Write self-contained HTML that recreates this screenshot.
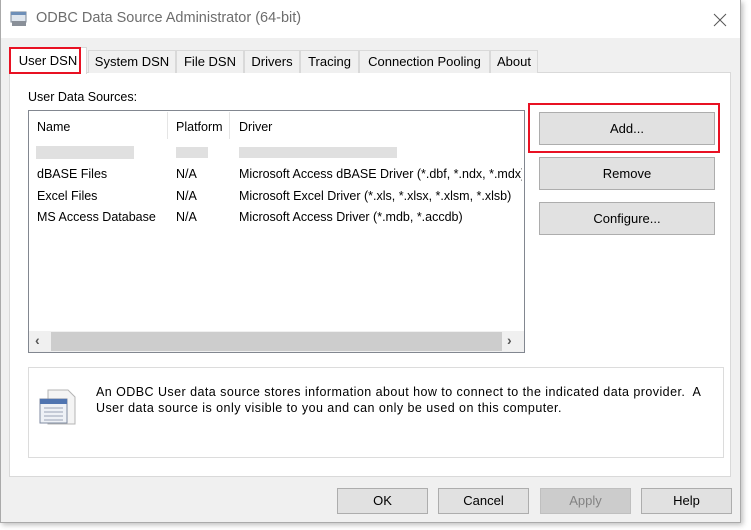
<!DOCTYPE html>
<html><head><style>
*{margin:0;padding:0;box-sizing:border-box}
body{width:751px;height:530px;background:#fff;position:relative;overflow:hidden;font-family:"Liberation Sans",sans-serif;font-size:12px;color:#000}
.abs{position:absolute}
.win{left:0;top:0;width:741px;height:523px;background:#f0f0f0;border:1px solid #aaa;border-top:none;box-shadow:2px 2px 5px rgba(0,0,0,.25)}
.title{left:1px;top:0;width:739px;height:38px;background:#fff}
.tab{position:absolute;top:50px;height:23px;background:#f0f0f0;border:1px solid #d9d9d9;border-bottom:none;text-align:center;line-height:21px;font-size:13px}
.btn{position:absolute;background:#e1e1e1;border:1px solid #adadad;text-align:center;font-size:13px}
.row{position:absolute;font-size:12.5px}
</style></head><body>
<div class="abs win"></div>
<div class="abs title"></div>
<svg class="abs" style="left:10px;top:10px" width="18" height="18" viewBox="0 0 18 18"><rect x="1" y="2" width="15" height="10" fill="#dfe6ee" stroke="#7b8796"/><rect x="1" y="2" width="15" height="3" fill="#6e8fb8"/><rect x="2" y="11" width="14" height="5" fill="#8a9099"/></svg>
<div class="abs" style="left:36px;top:10px;font-size:14.5px;color:#6d6d6d">ODBC Data Source Administrator (64-bit)</div>
<svg class="abs" style="left:713px;top:13px" width="14" height="14"><path d="M1 1L13 13M13 1L1 13" stroke="#555" stroke-width="1"/></svg>
<div class="abs" style="left:9px;top:72px;width:722px;height:405px;background:#fff;border:1px solid #d9d9d9"></div>
<div class="tab" style="left:88px;width:88px">System DSN</div>
<div class="tab" style="left:176px;width:68px">File DSN</div>
<div class="tab" style="left:244px;width:56px">Drivers</div>
<div class="tab" style="left:300px;width:59px">Tracing</div>
<div class="tab" style="left:359px;width:131px">Connection Pooling</div>
<div class="tab" style="left:490px;width:48px">About</div>
<div class="tab" style="left:9px;top:47px;height:27px;width:78px;background:#fff;line-height:25px">User DSN</div>
<div class="abs" style="left:9px;top:47px;width:72px;height:27px;border:2px solid #e81123"></div>
<div class="abs" style="left:28px;top:90px;font-size:12.5px">User Data Sources:</div>
<div class="abs" style="left:28px;top:110px;width:497px;height:243px;border:1px solid #828790;background:#fff"></div>
<div class="abs" style="left:167px;top:112px;width:1px;height:27px;background:#e5e5e5"></div>
<div class="abs" style="left:229px;top:112px;width:1px;height:27px;background:#e5e5e5"></div>
<div class="row" style="left:37px;top:120px">Name</div>
<div class="row" style="left:176px;top:120px">Platform</div>
<div class="row" style="left:239px;top:120px">Driver</div>
<div class="abs" style="left:36px;top:146px;width:98px;height:13px;background:#d3d3d3;opacity:.7"></div>
<div class="abs" style="left:176px;top:147px;width:32px;height:11px;background:#d3d3d3;opacity:.7"></div>
<div class="abs" style="left:239px;top:147px;width:158px;height:11px;background:#d3d3d3;opacity:.7"></div>
<div class="row" style="left:37px;top:167px">dBASE Files</div><div class="row" style="left:176px;top:167px">N/A</div>
<div class="row" style="left:239px;top:167px;width:283px;white-space:nowrap;overflow:hidden">Microsoft Access dBASE Driver (*.dbf, *.ndx, *.mdx)</div>
<div class="row" style="left:37px;top:189px">Excel Files</div><div class="row" style="left:176px;top:189px">N/A</div>
<div class="row" style="left:239px;top:189px">Microsoft Excel Driver (*.xls, *.xlsx, *.xlsm, *.xlsb)</div>
<div class="row" style="left:37px;top:210px">MS Access Database</div><div class="row" style="left:176px;top:210px">N/A</div>
<div class="row" style="left:239px;top:210px">Microsoft Access Driver (*.mdb, *.accdb)</div>
<div class="abs" style="left:29px;top:331px;width:495px;height:21px;background:#f0f0f0"></div>
<div class="abs" style="left:51px;top:332px;width:451px;height:19px;background:#cdcdcd"></div>
<div class="abs" style="left:35px;top:332px;font-size:14px;color:#555;font-weight:bold">&lsaquo;</div>
<div class="abs" style="left:507px;top:332px;font-size:14px;color:#555;font-weight:bold">&rsaquo;</div>
<div class="abs" style="left:28px;top:367px;width:696px;height:91px;border:1px solid #dcdcdc;background:#fff"></div>
<svg class="abs" style="left:38px;top:388px" width="42" height="42" viewBox="0 0 42 42"><path d="M10 2H30L37 9V36H10Z" fill="#f4f4f4" stroke="#b5b5b5"/><rect x="2" y="11" width="27" height="24" fill="#eef1f6" stroke="#7f8aa0"/><rect x="2" y="11" width="27" height="5" fill="#4f74b0"/><path d="M6 20h19M6 24h19M6 28h19M6 32h19" stroke="#9aa4b6"/></svg>
<div class="abs" style="left:96px;top:384px;font-size:12.5px;letter-spacing:0.45px;line-height:16px;white-space:nowrap">An ODBC User data source stores information about how to connect to the indicated data provider.&nbsp; A<br>User data source is only visible to you and can only be used on this computer.</div>
<div class="btn" style="left:539px;top:112px;width:176px;height:33px;line-height:31px">Add...</div>
<div class="abs" style="left:528px;top:103px;width:192px;height:50px;border:2px solid #e81123"></div>
<div class="btn" style="left:539px;top:157px;width:176px;height:33px;line-height:31px">Remove</div>
<div class="btn" style="left:539px;top:202px;width:176px;height:33px;line-height:31px">Configure...</div>
<div class="btn" style="left:337px;top:488px;width:91px;height:26px;line-height:24px">OK</div>
<div class="btn" style="left:438px;top:488px;width:91px;height:26px;line-height:24px">Cancel</div>
<div class="btn" style="left:540px;top:488px;width:91px;height:26px;line-height:24px;background:#ccc;border-color:#bfbfbf;color:#838383">Apply</div>
<div class="btn" style="left:641px;top:488px;width:91px;height:26px;line-height:24px">Help</div>
</body></html>
